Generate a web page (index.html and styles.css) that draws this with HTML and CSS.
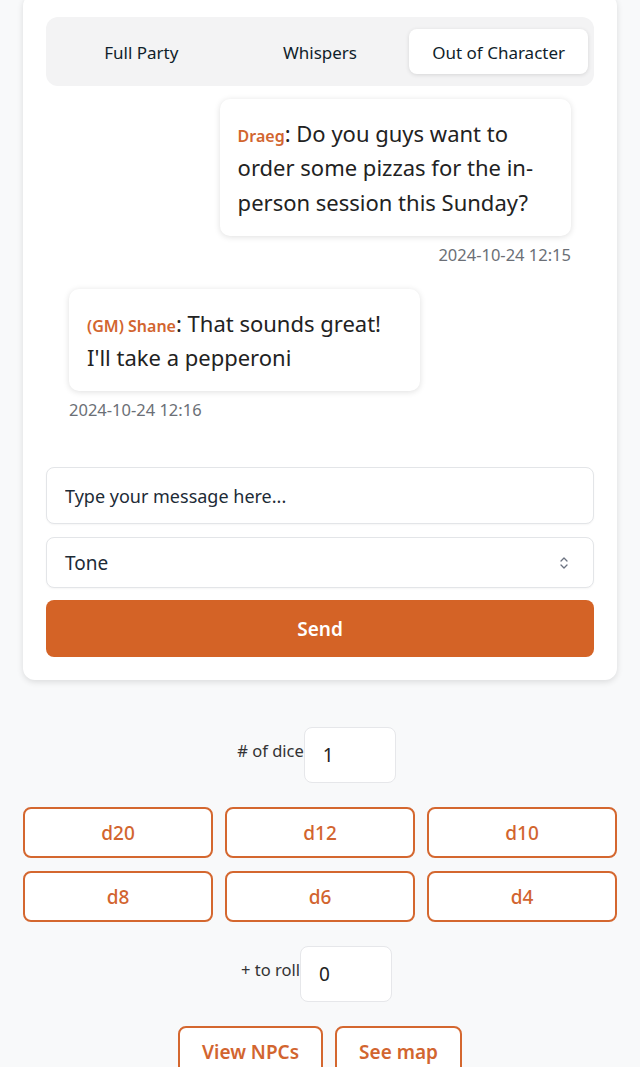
FILE: index.html
```html
<!DOCTYPE html>
<html lang="en">
<head>
    <meta charset="UTF-8">
    <meta name="viewport" content="width=device-width, initial-scale=1.0">
    <title>Party Chat</title>
    <link rel="stylesheet" href="styles.css">
</head>
<body>
    <div class="chat-card">
        <div class="tabs">
            <button class="tab">Full Party</button>
            <button class="tab">Whispers</button>
            <button class="tab active">Out of Character</button>
        </div>
        <div class="messages">
            <div class="message mine">
                <div class="bubble"><span class="author">Draeg</span>: Do you guys want to order some pizzas for the in-person session this Sunday?</div>
                <div class="stamp">2024-10-24 12:15</div>
            </div>
            <div class="message">
                <div class="bubble"><span class="author">(GM) Shane</span>: That sounds great! I'll take a pepperoni</div>
                <div class="stamp">2024-10-24 12:16</div>
            </div>
        </div>
        <div class="chat-form">
            <input class="field text-field" type="text" placeholder="Type your message here...">
            <div class="field select-field">
                <span>Tone</span>
                <svg class="chevrons" width="10" height="16" viewBox="0 0 10 16" fill="none" stroke="#6b7280" stroke-width="1.3" stroke-linecap="round" stroke-linejoin="round">
                    <path d="M2 6 L5 3 L8 6"/>
                    <path d="M2 10 L5 13 L8 10"/>
                </svg>
            </div>
            <button class="send-btn">Send</button>
        </div>
    </div>

    <div class="dice-panel">
        <div class="num-row">
            <label class="num-label">#&nbsp;of dice</label>
            <div class="num-box">1</div>
        </div>
        <div class="dice-grid">
            <button class="outline-btn">d20</button>
            <button class="outline-btn">d12</button>
            <button class="outline-btn">d10</button>
            <button class="outline-btn">d8</button>
            <button class="outline-btn">d6</button>
            <button class="outline-btn">d4</button>
        </div>
        <div class="num-row">
            <label class="num-label">+ to roll</label>
            <div class="num-box">0</div>
        </div>
        <div class="links">
            <button class="outline-btn link-btn">View NPCs</button>
            <button class="outline-btn link-btn">See map</button>
        </div>
    </div>
</body>
</html>
```

FILE: styles.css
```css
* { margin: 0; padding: 0; box-sizing: border-box; }
body {
    font-family: "Noto Sans", "Open Sans", Arial, sans-serif;
    background: #f8f9fa;
    color: #1f2328;
    padding: 0 23px;
    height: 1067px;
    overflow: hidden;
}
button { font-family: inherit; }

.chat-card {
    margin-top: -6px;
    background: #fff;
    border-radius: 12px;
    padding: 23px;
    box-shadow: 0 2px 6px rgba(0,0,0,0.12);
}
.tabs {
    display: grid;
    grid-template-columns: repeat(3, 1fr);
    padding: 12px 6px;
    background: #f3f3f4;
    border-radius: 12px;
}
.tab {
    height: 45px;
    padding-top: 2px;
    border: none;
    background: transparent;
    border-radius: 8px;
    font-size: 17px;
    font-weight: 400;
    color: #0f1e2a;
}
.tab.active { background: #fff; box-shadow: 0 1px 4px rgba(0,0,0,0.12); }

.messages { padding: 13px 23px 45px; display: flex; flex-direction: column; gap: 22px; }
.message { display: flex; flex-direction: column; align-items: flex-start; }
.message.mine { align-items: flex-end; }
.bubble {
    max-width: 70%;
    background: #fff;
    border-radius: 10px;
    padding: 17px 18px;
    font-size: 22px;
    line-height: 34.3px;
    color: #222;
    box-shadow: 0 1px 6px rgba(0,0,0,0.13);
}
.author { font-size: 16px; line-height: 1; font-weight: 600; color: #d2652f; }
.stamp { margin-top: 7px; font-size: 16.5px; line-height: 24px; color: #6b6f76; }

.chat-form { display: flex; flex-direction: column; gap: 12px; }
.field {
    width: 100%;
    border: 1px solid #e3e5e8;
    border-radius: 8px;
    background: #fff;
    padding: 0 18px;
    font-family: inherit;
    font-size: 19px;
    color: #1d2b36;
    box-shadow: 0 1px 2px rgba(0,0,0,0.04);
}
.text-field { height: 57px; margin-bottom: 1px; outline: none; font-size: 18px; }
.text-field::placeholder { color: #1d2b36; }
.select-field {
    height: 51px;
    display: flex;
    align-items: center;
    justify-content: space-between;
    padding-right: 24px;
}
.send-btn {
    height: 57px;
    border: none;
    border-radius: 8px;
    background: #d46326;
    color: #fff;
    font-size: 19px;
    font-weight: 600;
}

.dice-panel { padding-top: 47px; display: flex; flex-direction: column; gap: 24px; }
.num-row { display: flex; justify-content: center; align-items: center; padding-right: 7px; }
.num-label { font-size: 16.5px; color: #333; margin-bottom: 10px; }
.num-box {
    width: 92px;
    height: 56px;
    background: #fff;
    border: 1px solid #e6e7ea;
    border-radius: 8px;
    padding: 0 18px;
    display: flex;
    align-items: center;
    font-size: 19px;
    color: #222;
}
.dice-grid { display: grid; grid-template-columns: repeat(3, 1fr); gap: 13px 12px; }
.outline-btn {
    height: 51px;
    background: #fff;
    border: 2px solid #d4672f;
    border-radius: 8px;
    color: #d2652f;
    font-size: 19px;
    font-weight: 500;
}
.links { display: flex; justify-content: center; gap: 12px; }
.link-btn { padding: 0 22px; font-weight: 600; }
```
